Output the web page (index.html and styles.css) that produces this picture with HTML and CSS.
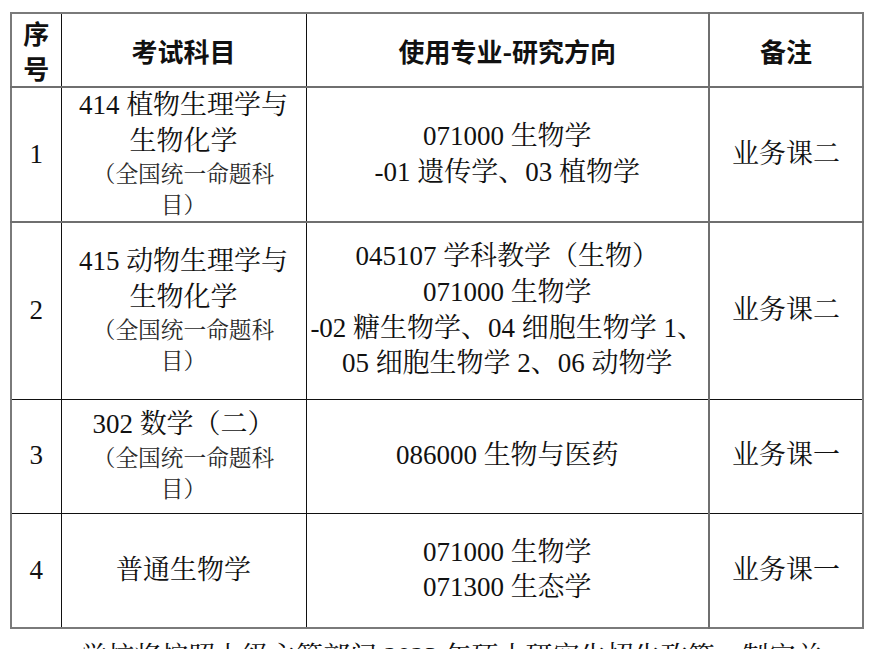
FILE: index.html
```html
<!DOCTYPE html>
<html lang="zh-CN">
<head>
<meta charset="utf-8">
<title>考试科目</title>
<link rel="stylesheet" href="styles.css">
</head>
<body>
<table class="exam">
  <colgroup>
    <col class="c-no">
    <col class="c-subj">
    <col class="c-major">
    <col class="c-note">
  </colgroup>
  <thead>
    <tr class="r-head">
      <th><span class="line">序</span><span class="line">号</span></th>
      <th>考试科目</th>
      <th>使用专业-研究方向</th>
      <th>备注</th>
    </tr>
  </thead>
  <tbody>
    <tr class="r1">
      <td>1</td>
      <td><span class="line">414 植物生理学与</span><span class="line">生物化学</span><span class="small">（全国统一命题科</span><span class="small">目）</span></td>
      <td><span class="line">071000 生物学</span><span class="line">-01 遗传学、03 植物学</span></td>
      <td>业务课二</td>
    </tr>
    <tr class="r2">
      <td>2</td>
      <td><span class="line">415 动物生理学与</span><span class="line">生物化学</span><span class="small">（全国统一命题科</span><span class="small">目）</span></td>
      <td class="tight"><span class="line">045107 学科教学（生物）</span><span class="line">071000 生物学</span><span class="line">-02 糖生物学、04 细胞生物学 1、</span><span class="line">05 细胞生物学 2、06 动物学</span></td>
      <td>业务课二</td>
    </tr>
    <tr class="r3">
      <td>3</td>
      <td><span class="line">302 数学（二）</span><span class="small">（全国统一命题科</span><span class="small">目）</span></td>
      <td>086000 生物与医药</td>
      <td>业务课一</td>
    </tr>
    <tr class="r4">
      <td>4</td>
      <td>普通生物学</td>
      <td><span class="line">071000 生物学</span><span class="line">071300 生态学</span></td>
      <td>业务课一</td>
    </tr>
  </tbody>
</table>
<p class="after">学校将按照上级主管部门 2023 年硕士研究生招生政策，制定并</p>
</body>
</html>
```

FILE: styles.css
```css
html, body {
  margin: 0;
  padding: 0;
  background: #ffffff;
}

body {
  width: 870px;
  height: 649px;
  overflow: hidden;
  color: #111111;
  font-family: "Liberation Serif", "Noto Serif CJK SC", "Noto Sans CJK SC", serif;
  font-size: 27px;
}

.exam {
  margin: 12px 0 0 10px;
  width: 852px;
  table-layout: fixed;
  border-collapse: collapse;
  border: 2px solid #7a7a7a;
}

.c-no { width: 50px; }
.c-subj { width: 245px; }
.c-major { width: 403px; }
.c-note { width: 154px; }

.exam th,
.exam td {
  border: 1px solid #111111;
  padding: 0;
  text-align: center;
  vertical-align: middle;
  white-space: nowrap;
  line-height: 35.5px;
}

.exam th {
  font-family: "Noto Sans CJK SC", "Liberation Sans", sans-serif;
  font-weight: 700;
  font-size: 26px;
  line-height: 35px;
}

.exam tr > :nth-child(3) {
  border-right: 2px solid #6f6f6f;
}

.r-head th,
.r1 td {
  border-bottom: 2px solid #6f6f6f;
}

.r-head { height: 74px; }
.r1 { height: 135px; }
.r2 { height: 177px; }
.r3 { height: 114px; }
.r4 { height: 115px; }

.line {
  display: block;
}

.tight .line {
  line-height: 35.7px;
}

.small {
  display: block;
  font-size: 22.7px;
  line-height: 31px;
  color: #2a2a2a;
}

.after {
  margin: 11px 0 0 80px;
  line-height: 35px;
  white-space: nowrap;
}
```
